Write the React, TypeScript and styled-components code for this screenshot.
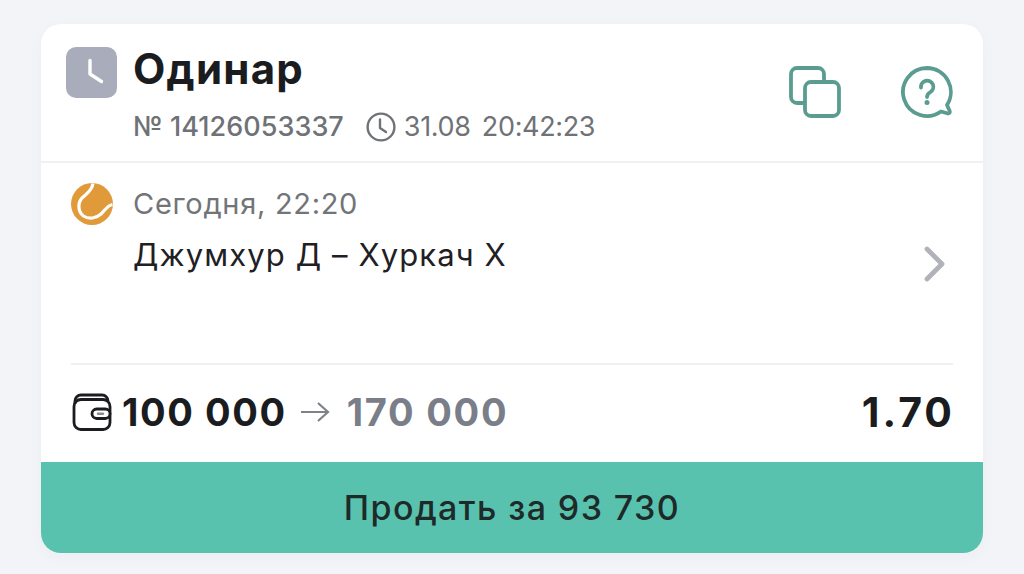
import React from "react";
import styled, { createGlobalStyle } from "styled-components";

const Global = createGlobalStyle`
  html, body { margin: 0; padding: 0; background: #f3f4f7; }
  body { font-family: Inter, "Liberation Sans", sans-serif; }
`;

const Page = styled.div`
  width: 1024px;
  height: 574px;
  box-sizing: border-box;
  padding: 24px 41px 21px;
  overflow: hidden;
`;

const Card = styled.section`
  height: 529px;
  background: #fff;
  border-radius: 20px;
  overflow: hidden;
  display: flex;
  flex-direction: column;
  box-shadow: 0 4px 16px rgba(40, 50, 70, 0.03);
`;

const Header = styled.header`
  height: 139px;
  flex: none;
  box-sizing: border-box;
  padding: 23px 30px 0 25px;
  border-bottom: 2px solid #eff0f1;
  display: flex;
  justify-content: space-between;
  align-items: flex-start;
`;

const HeaderMain = styled.div`
  display: grid;
  grid-template-columns: 51px auto;
  column-gap: 16px;
  align-items: center;
`;

const TypeBadge = styled.div`
  width: 51px;
  height: 51px;
  align-self: start;
  border-radius: 10px;
  background: #a9adbb;
  display: flex;
  align-items: center;
  justify-content: center;
`;

const Title = styled.h1`
  margin: 0 0 8px;
  font-size: 42px;
  line-height: 44px;
  font-weight: 700;
  letter-spacing: 1.25px;
  color: #1b1c20;
`;

const Meta = styled.div`
  grid-column: 2;
  margin-top: 11px;
  display: flex;
  align-items: center;
  font-size: 27px;
  line-height: 34px;
  color: #6f7276;
`;

const TicketNumber = styled.span`
  font-weight: 500;
  letter-spacing: 0.05px;
  margin-right: 22px;
`;

const MetaTime = styled.span`
  display: flex;
  align-items: center;
  gap: 8px;
  font-size: 27px;
  letter-spacing: -0.35px;
  word-spacing: 4px;
`;

const Actions = styled.div`
  display: flex;
  gap: 60px;
  margin-top: 19px;
`;

const Event = styled.div`
  height: 202px;
  flex: none;
  box-sizing: border-box;
  margin: 0 30px;
  border-bottom: 2px solid #eff0f1;
  display: flex;
  position: relative;
  padding-top: 20px;
`;

const EventIcon = styled.div`
  width: 62px;
  flex: none;
`;

const EventDate = styled.div`
  font-size: 29px;
  line-height: 42px;
  letter-spacing: 0.7px;
  color: #727578;
`;

const EventName = styled.div`
  font-size: 31px;
  line-height: 38px;
  letter-spacing: 1.1px;
  color: #1f2024;
  margin-top: 11px;
`;

const Chevron = styled.div`
  position: absolute;
  right: 6px;
  top: 83px;
  line-height: 0;
`;

const Summary = styled.div`
  flex: 1;
  display: flex;
  align-items: center;
  justify-content: space-between;
  padding: 0 28px 3px 31px;
`;

const Amounts = styled.div`
  display: flex;
  align-items: center;
`;

const Stake = styled.span`
  font-size: 38px;
  font-weight: 700;
  color: #1b1c20;
  margin-left: 8px;
  letter-spacing: 1.6px;
`;

const Payout = styled.span`
  font-size: 38px;
  font-weight: 700;
  color: #7a7e88;
  letter-spacing: 1.75px;
`;

const ArrowBox = styled.span`
  margin: 0 16px 0 12px;
  line-height: 0;
`;

const Odds = styled.span`
  font-size: 41px;
  font-weight: 700;
  color: #1b1c20;
  letter-spacing: 3px;
`;

const SellButton = styled.button`
  height: 91px;
  flex: none;
  border: 0;
  padding: 0;
  background: #59c2af;
  color: #1d2a28;
  font-family: inherit;
  font-size: 34px;
  font-weight: 500;
  letter-spacing: 1.4px;
`;

const App: React.FC = () => (
  <Page>
    <Global />
    <Card>
      <Header>
        <HeaderMain>
          <TypeBadge>
            <svg width="51" height="51" viewBox="0 0 51 51" fill="none">
              <path d="M24 13.5V27L35.5 34.5" stroke="#fff" strokeWidth="3.4" strokeLinecap="round" strokeLinejoin="round" />
            </svg>
          </TypeBadge>
          <Title>Одинар</Title>
          <Meta>
            <TicketNumber>№ 14126053337</TicketNumber>
            <MetaTime>
              <svg width="30" height="30" viewBox="0 0 30 30" fill="none">
                <circle cx="15" cy="15" r="13.4" stroke="#6f7276" strokeWidth="2.4" />
                <path d="M14 7.5V16L20 20" stroke="#6f7276" strokeWidth="2.4" strokeLinecap="round" strokeLinejoin="round" />
              </svg>
              31.08 20:42:23
            </MetaTime>
          </Meta>
        </HeaderMain>
        <Actions>
          <svg width="52" height="52" viewBox="0 0 52 52" fill="none">
            <path d="M15 37H8A6 6 0 0 1 2 31V8A6 6 0 0 1 8 2H29A6 6 0 0 1 35 8V16" stroke="#5a9c8f" strokeWidth="3.8" />
            <rect x="16" y="16" width="34" height="34" rx="6" stroke="#5a9c8f" strokeWidth="3.8" />
          </svg>
          <svg width="52" height="52" viewBox="0 0 52 52" fill="none">
            <path d="M26 2A24 24 0 1 0 40 45.5L47 47.5Q49.5 47.5 48.5 44.5L46 39A24 24 0 0 0 26 2Z" stroke="#5a9c8f" strokeWidth="3.8" strokeLinejoin="round" />
            <path d="M20 21.5A6.2 6.2 0 1 1 29.5 26C27.2 27.4 26.2 28.4 26 31" stroke="#5a9c8f" strokeWidth="3.8" strokeLinecap="round" />
            <circle cx="26" cy="36.5" r="2.5" fill="#5a9c8f" />
          </svg>
        </Actions>
      </Header>
      <Event>
        <EventIcon>
          <svg width="42" height="42" viewBox="0 0 42 42">
            <circle cx="21" cy="21" r="21" fill="#e09a3a" />
            <path d="M22 0.5C21 7.5 16 10.5 12 14C6.5 19 6.5 28.5 12.5 33C18 36.5 25 35.5 30 31C34 27.5 36 22.5 41.5 21.5" fill="none" stroke="#fff" strokeWidth="3.2" />
          </svg>
        </EventIcon>
        <div>
          <EventDate>Сегодня, 22:20</EventDate>
          <EventName>Джумхур Д – Хуркач Х</EventName>
        </div>
        <Chevron>
          <svg width="24" height="36" viewBox="0 0 24 36" fill="none">
            <path d="M4 3L19 18L4 33" stroke="#b1b3b9" strokeWidth="4.8" strokeLinecap="round" strokeLinejoin="round" />
          </svg>
        </Chevron>
      </Event>
      <Summary>
        <Amounts>
          <svg width="42" height="38" viewBox="0 0 42 38" fill="none">
            <path d="M3 11V8A6 6 0 0 1 9 2H30A6 6 0 0 1 36 8" stroke="#1b1c20" strokeWidth="2.8" />
            <rect x="2" y="6.5" width="36" height="30" rx="7" stroke="#1b1c20" strokeWidth="2.8" />
            <rect x="20" y="16" width="18" height="9.5" rx="4.7" fill="#fff" stroke="#1b1c20" strokeWidth="2.8" />
            <path d="M26 20.7H31" stroke="#8a8c90" strokeWidth="2.4" strokeLinecap="round" />
          </svg>
          <Stake>100 000</Stake>
          <ArrowBox>
            <svg width="32" height="24" viewBox="0 0 32 24" fill="none">
              <path d="M2 12H29M19 3L29 12L19 21" stroke="#7f8286" strokeWidth="2.2" />
            </svg>
          </ArrowBox>
          <Payout>170 000</Payout>
        </Amounts>
        <Odds>1.70</Odds>
      </Summary>
      <SellButton>Продать за 93 730</SellButton>
    </Card>
  </Page>
);

export default App;
